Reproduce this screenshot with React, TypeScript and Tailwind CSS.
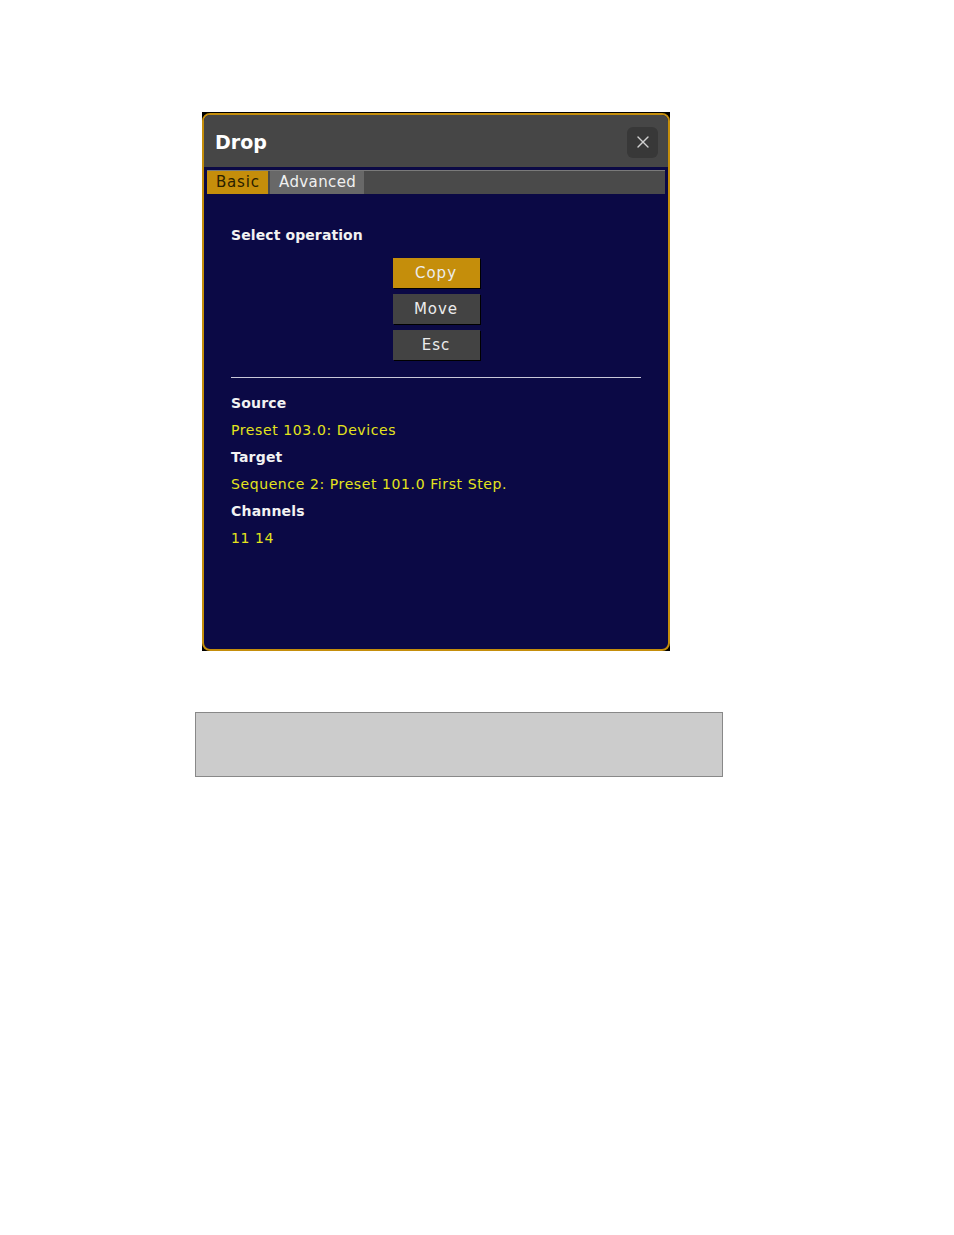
import { X } from "lucide-react";

const font = { fontFamily: '"DejaVu Sans", "Liberation Sans", sans-serif' };

const OpButton = ({ label, active }: { label: string; active?: boolean }) => (
  <button
    className={`w-[87px] h-[30px] text-[15px] tracking-[1px] text-[#ececec] shadow-[1px_1px_0_#000] ${
      active ? "bg-[#c58e0b]" : "bg-[#434343]"
    }`}
  >
    {label}
  </button>
);

const Label = ({ children }: { children: React.ReactNode }) => (
  <div className="h-[27px] flex items-center text-[14px] font-bold text-[#f2f2f2] tracking-[0.2px]">
    {children}
  </div>
);

const Value = ({ children }: { children: React.ReactNode }) => (
  <div className="h-[27px] flex items-center text-[14px] text-[#e4e41c] tracking-[0.6px]">
    {children}
  </div>
);

const App = () => {
  return (
    <div className="w-[954px] h-[1235px] bg-white overflow-hidden" style={font}>
      <div className="ml-[202px] mt-[112px] w-[468px] h-[539px] bg-black pt-px">
        <div className="h-full border-2 border-[#c58e0b] rounded-[8px] overflow-hidden bg-[#0b0945] flex flex-col">
          {/* title bar */}
          <div className="h-[52px] bg-[#464646] flex items-center justify-between pl-[11px] pr-[10px] pt-[2px]">
            <span className="text-[19px] font-bold text-white">Drop</span>
            <div className="w-[31px] h-[31px] rounded-md bg-[#383838] flex items-center justify-center">
              <X size={20} strokeWidth={1.6} className="text-[#d0d0d0]" />
            </div>
          </div>

          {/* tabs */}
          <div className="mx-[3px] mt-[3px] h-[24px] bg-[#4a4a4a] border-t border-[#7a7a7a] flex">
            <div className="w-[61px] bg-[#c58e0b] text-[#2a2000] text-[15px] tracking-[0.8px] flex items-center pl-[9px]">
              Basic
            </div>
            <div className="ml-[2px] w-[94px] bg-[#686868] text-[#f0f0f0] text-[15px] tracking-[0.4px] flex items-center pl-[9px]">
              Advanced
            </div>
          </div>

          {/* body */}
          <div className="px-[27px] pt-[29px]">
            <div className="text-[14px] font-bold text-[#f2f2f2] tracking-[0.1px] h-[24px] flex items-center">
              Select operation
            </div>
            <div className="mt-[11px] flex flex-col items-center gap-[6px]">
              <OpButton label="Copy" active />
              <OpButton label="Move" />
              <OpButton label="Esc" />
            </div>
            <div className="mt-[17px] h-px bg-[#c8c8d8]" />
            <div className="mt-[12px]">
              <Label>Source</Label>
              <Value>Preset 103.0: Devices</Value>
              <Label>Target</Label>
              <Value>Sequence 2: Preset 101.0 First Step.</Value>
              <Label>Channels</Label>
              <Value>11 14</Value>
            </div>
          </div>
        </div>
      </div>

      <div className="ml-[195px] mt-[61px] w-[528px] h-[65px] bg-[#cccccc] border border-[#888888]" />
    </div>
  );
};

export default App;
